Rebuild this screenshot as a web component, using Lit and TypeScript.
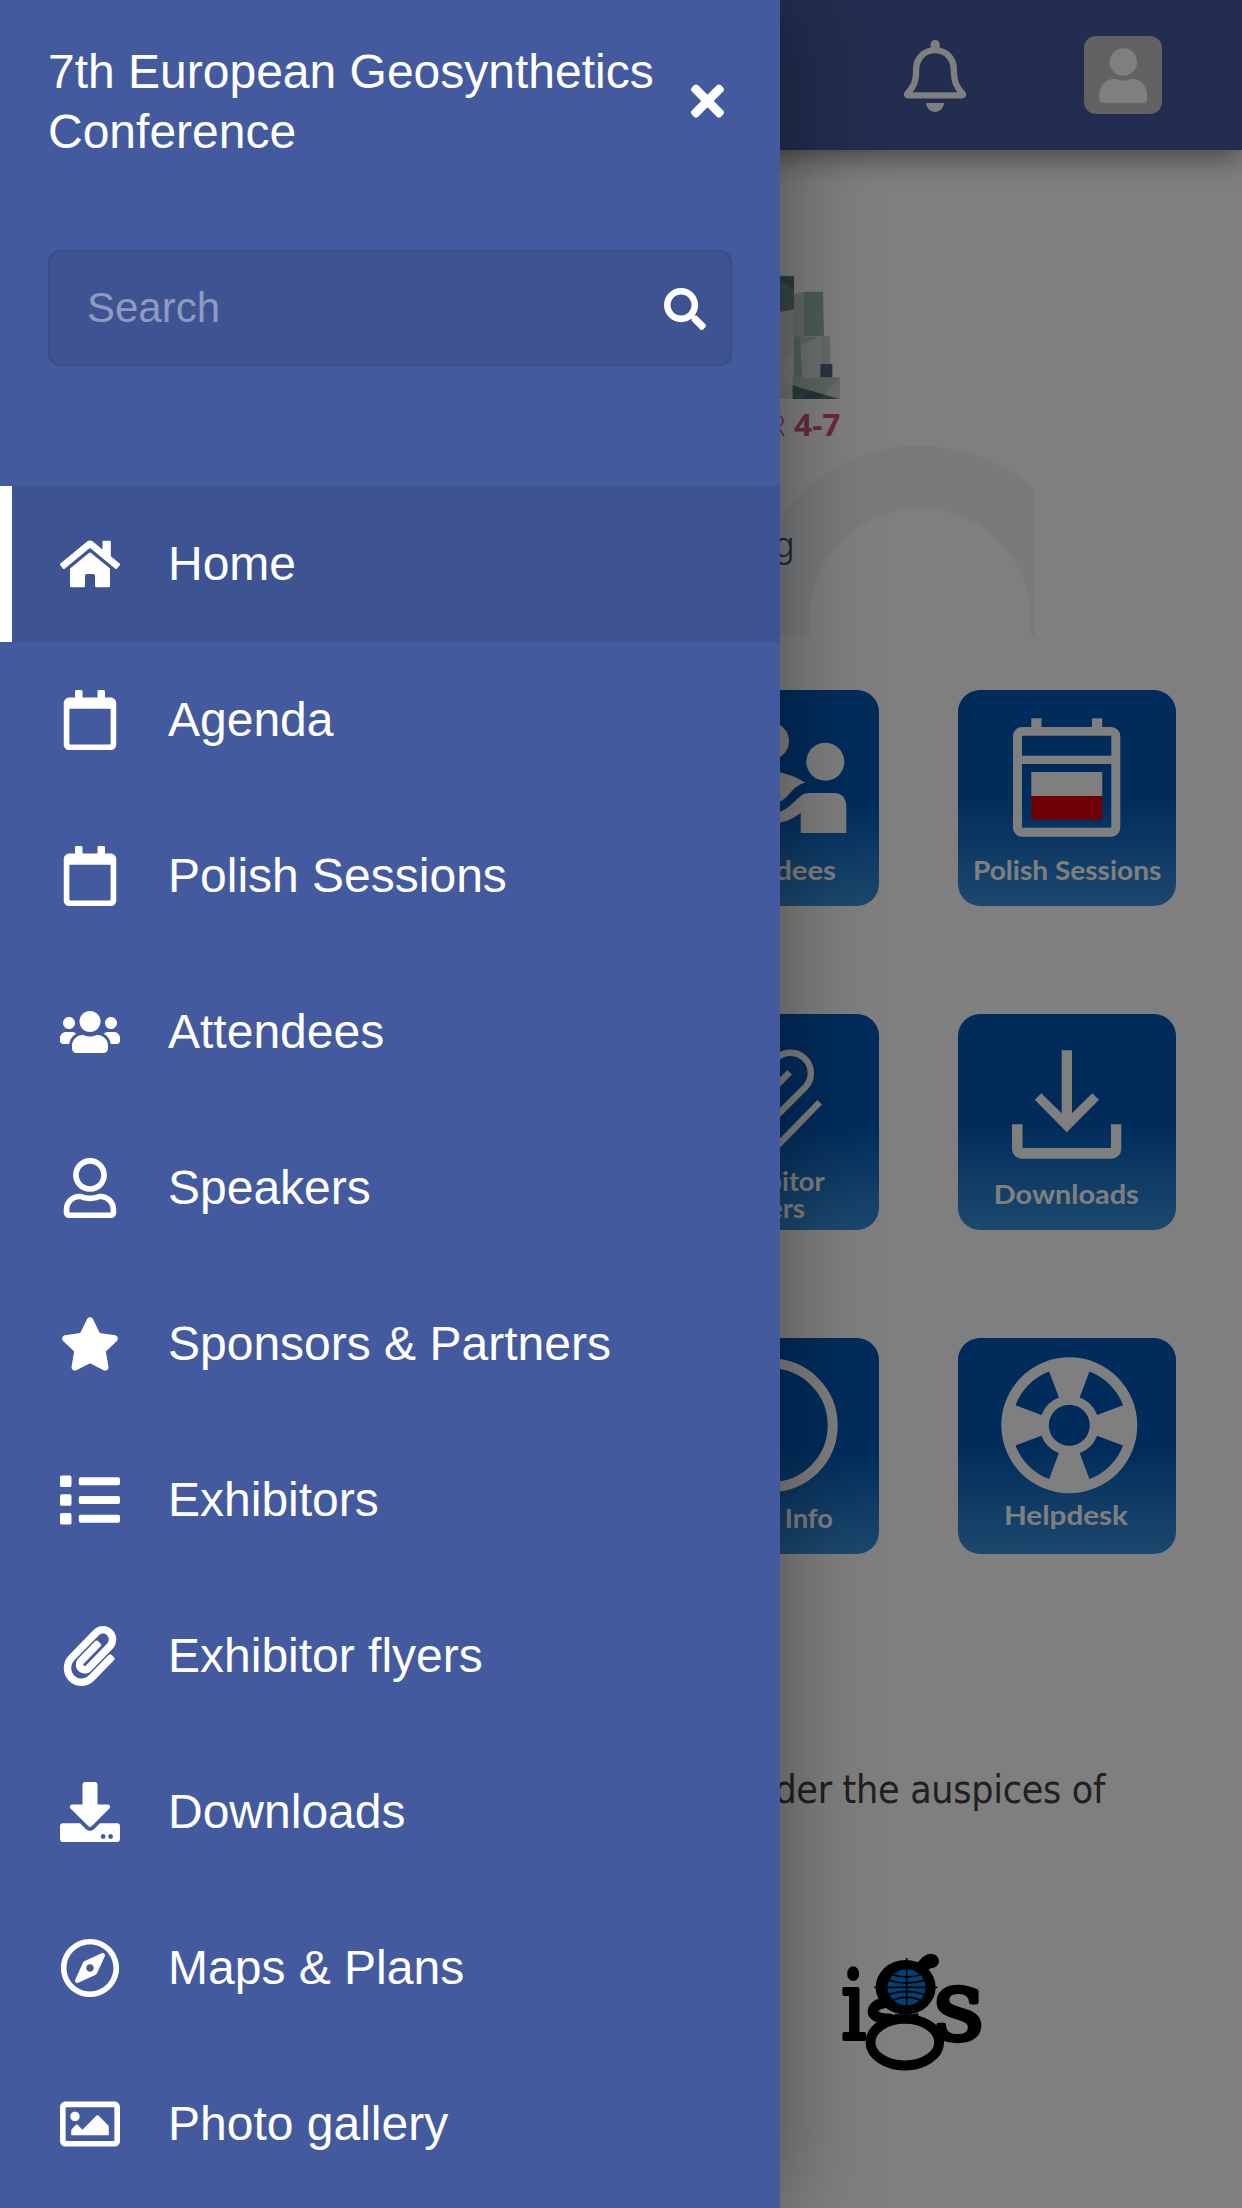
import { LitElement, html, css, svg } from "lit";
import { customElement, property } from "lit/decorators.js";

interface Glyph {
  width: number;
  d: string;
}

const GLYPHS: Record<string, Glyph> = {
  home: {
    width: 576,
    d: "M280.37 148.26L96 300.11V464a16 16 0 0 0 16 16l112.06-.29a16 16 0 0 0 15.92-16V368a16 16 0 0 1 16-16h64a16 16 0 0 1 16 16v95.64a16 16 0 0 0 16 16.05L464 480a16 16 0 0 0 16-16V300L295.67 148.26a12.19 12.19 0 0 0-15.3 0zM571.6 251.47L488 182.56V44.05a12 12 0 0 0-12-12h-56a12 12 0 0 0-12 12v72.61L318.47 43a48 48 0 0 0-61 0L4.34 251.47a12 12 0 0 0-1.6 16.9l25.5 31A12 12 0 0 0 45.15 301l235.22-193.74a12.19 12.19 0 0 1 15.3 0L530.9 301a12 12 0 0 0 16.9-1.6l25.5-31a12 12 0 0 0-1.7-16.93z",
  },
  calendar: {
    width: 448,
    d: "M400 64h-48V12c0-6.6-5.4-12-12-12h-40c-6.6 0-12 5.4-12 12v52H160V12c0-6.6-5.4-12-12-12h-40c-6.6 0-12 5.4-12 12v52H48C21.5 64 0 85.5 0 112v352c0 26.5 21.5 48 48 48h352c26.5 0 48-21.5 48-48V112c0-26.5-21.5-48-48-48zm-6 400H54c-3.3 0-6-2.7-6-6V160h352v298c0 3.3-2.7 6-6 6z",
  },
  users: {
    width: 640,
    d: "M96 224c35.3 0 64-28.7 64-64s-28.7-64-64-64-64 28.7-64 64 28.7 64 64 64zm448 0c35.3 0 64-28.7 64-64s-28.7-64-64-64-64 28.7-64 64 28.7 64 64 64zm32 32h-64c-17.6 0-33.5 7.1-45.1 18.6 40.3 22.1 68.9 62 75.1 109.4h66c17.7 0 32-14.3 32-32v-32c0-35.3-28.7-64-64-64zm-256 0c61.9 0 112-50.1 112-112S381.9 32 320 32 208 82.1 208 144s50.1 112 112 112zm76.8 32h-8.3c-20.8 10-43.9 16-68.5 16s-47.6-6-68.5-16h-8.3C179.6 288 128 339.6 128 403.2V432c0 26.5 21.5 48 48 48h288c26.5 0 48-21.5 48-48v-28.8c0-63.6-51.6-115.2-115.2-115.2zm-223.7-13.4C161.5 263.1 145.6 256 128 256H64c-35.3 0-64 28.7-64 64v32c0 17.7 14.3 32 32 32h65.9c6.3-47.4 34.9-87.3 75.2-109.4z",
  },
  user: {
    width: 448,
    d: "M313.6 304c-28.7 0-42.5 16-89.6 16-47.1 0-60.8-16-89.6-16C60.2 304 0 364.2 0 438.4V464c0 26.5 21.5 48 48 48h352c26.5 0 48-21.5 48-48v-25.6c0-74.2-60.2-134.4-134.4-134.4zM400 464H48v-25.6c0-47.6 38.8-86.4 86.4-86.4 14.6 0 38.3 16 89.6 16 51.7 0 74.9-16 89.6-16 47.6 0 86.4 38.8 86.4 86.4V464zM224 288c79.5 0 144-64.5 144-144S303.5 0 224 0 80 64.5 80 144s64.5 144 144 144zm0-240c52.9 0 96 43.1 96 96s-43.1 96-96 96-96-43.1-96-96 43.1-96 96-96z",
  },
  star: {
    width: 576,
    d: "M259.3 17.8L194 150.2 47.9 171.5c-26.2 3.8-36.7 36.1-17.7 54.6l105.7 103-25 145.5c-4.5 26.3 23.2 46 46.4 33.7L288 439.6l130.7 68.7c23.2 12.2 50.9-7.4 46.4-33.7l-25-145.5 105.7-103c19-18.5 8.5-50.8-17.7-54.6L382 150.2 316.7 17.8c-11.7-23.6-45.6-23.9-57.4 0z",
  },
  list: {
    width: 512,
    d: "M16 46h66a16 16 0 0 1 16 16v68a16 16 0 0 1-16 16H16a16 16 0 0 1-16-16V62a16 16 0 0 1 16-16zM16 206h66a16 16 0 0 1 16 16v68a16 16 0 0 1-16 16H16a16 16 0 0 1-16-16v-68a16 16 0 0 1 16-16zM16 366h66a16 16 0 0 1 16 16v68a16 16 0 0 1-16 16H16a16 16 0 0 1-16-16v-68a16 16 0 0 1 16-16zM176 62h320a16 16 0 0 1 16 16v36a16 16 0 0 1-16 16H176a16 16 0 0 1-16-16V78a16 16 0 0 1 16-16zM176 222h320a16 16 0 0 1 16 16v36a16 16 0 0 1-16 16H176a16 16 0 0 1-16-16v-36a16 16 0 0 1 16-16zM176 382h320a16 16 0 0 1 16 16v36a16 16 0 0 1-16 16H176a16 16 0 0 1-16-16v-36a16 16 0 0 1 16-16z",
  },
  clip: {
    width: 448,
    d: "M43.246 466.142c-58.43-60.289-57.341-157.511 1.386-217.581L254.392 34c44.316-45.332 116.351-45.336 160.671 0 43.89 44.894 43.943 117.329 0 162.276L232.214 383.128c-29.855 30.537-78.633 30.111-107.982-.998-28.275-29.97-27.368-77.473 1.452-106.953l143.743-146.835c6.182-6.314 16.312-6.422 22.626-.241l22.861 22.379c6.315 6.182 6.422 16.312.241 22.626L171.427 319.927c-4.932 5.045-5.236 13.428-.648 18.292 4.372 4.634 11.245 4.711 15.688.165l182.849-186.851c19.613-20.062 19.613-52.725-.011-72.798-19.189-19.627-49.957-19.637-69.154 0L90.39 293.295c-34.763 35.56-35.299 93.12-1.191 128.313 34.01 35.093 88.985 35.137 123.058.286l172.06-175.999c6.177-6.319 16.307-6.433 22.626-.256l22.877 22.364c6.319 6.177 6.434 16.307.256 22.626l-172.06 175.998c-59.576 60.938-155.943 60.216-214.77-.485z",
  },
  download: {
    width: 512,
    d: "M216 0h80c13.3 0 24 10.7 24 24v168h87.7c17.8 0 26.7 21.5 14.1 34.1L269.7 378.3c-7.5 7.5-19.8 7.5-27.3 0L90.1 226.1c-12.6-12.6-3.7-34.1 14.1-34.1H192V24c0-13.3 10.7-24 24-24zm296 376v112c0 13.3-10.7 24-24 24H24c-13.3 0-24-10.7-24-24V376c0-13.3 10.7-24 24-24h146.7l49 49c20.1 20.1 52.5 20.1 72.6 0l49-49H488c13.3 0 24 10.7 24 24zm-124 88c0-11-9-20-20-20s-20 9-20 20 9 20 20 20 20-9 20-20zm64 0c0-11-9-20-20-20s-20 9-20 20 9 20 20 20 20-9 20-20z",
  },
  compass: {
    width: 496,
    d: "M347.94 129.86L203.6 195.83a31.938 31.938 0 0 0-15.77 15.77l-65.97 144.34c-7.61 16.65 9.54 33.81 26.2 26.2l144.34-65.97a31.938 31.938 0 0 0 15.77-15.77l65.97-144.34c7.61-16.66-9.54-33.81-26.2-26.2zm-77.36 148.72c-12.47 12.47-32.69 12.47-45.16 0-12.47-12.47-12.47-32.69 0-45.16 12.47-12.47 32.69-12.47 45.16 0 12.47 12.47 12.47 32.69 0 45.16zM248 8C111.03 8 0 119.03 0 256s111.03 248 248 248 248-111.03 248-248S384.97 8 248 8zm0 448c-110.28 0-200-89.72-200-200S137.72 56 248 56s200 89.72 200 200-89.72 200-200 200z",
  },
  image: {
    width: 512,
    d: "M464 64H48C21.49 64 0 85.49 0 112v288c0 26.51 21.49 48 48 48h416c26.51 0 48-21.49 48-48V112c0-26.51-21.49-48-48-48zm-6 336H54a6 6 0 0 1-6-6V118a6 6 0 0 1 6-6h404a6 6 0 0 1 6 6v276a6 6 0 0 1-6 6zM128 152c-22.091 0-40 17.909-40 40s17.909 40 40 40 40-17.909 40-40-17.909-40-40-40zM96 352h320v-80l-87.515-87.515c-4.686-4.686-12.284-4.686-16.971 0L192 304l-39.515-39.515c-4.686-4.686-12.284-4.686-16.971 0L96 304v48z",
  },
  close: {
    width: 352,
    d: "M242.72 256l100.07-100.07c12.28-12.28 12.28-32.19 0-44.48l-22.24-22.24c-12.28-12.28-32.19-12.28-44.48 0L176 189.28 75.93 89.21c-12.28-12.28-32.19-12.28-44.48 0L9.21 111.45c-12.28 12.28-12.28 32.19 0 44.48L109.28 256 9.21 356.07c-12.28 12.28-12.28 32.19 0 44.48l22.24 22.24c12.28 12.28 32.2 12.28 44.48 0L176 322.72l100.07 100.07c12.28 12.28 32.2 12.28 44.48 0l22.24-22.24c12.28-12.28 12.28-32.19 0-44.48L242.72 256z",
  },
  search: {
    width: 512,
    d: "M505 442.7L405.3 343c-4.5-4.5-10.6-7-17-7H372c27.6-35.3 44-79.7 44-128C416 93.1 322.9 0 208 0S0 93.1 0 208s93.1 208 208 208c48.3 0 92.7-16.4 128-44v16.3c0 6.4 2.5 12.5 7 17l99.7 99.7c9.4 9.4 24.6 9.4 33.9 0l28.3-28.3c9.4-9.4 9.4-24.6.1-34zM208 336c-70.7 0-128-57.2-128-128 0-70.7 57.2-128 128-128 70.7 0 128 57.2 128 128 0 70.7-57.2 128-128 128z",
  },
};

@customElement("ui-glyph")
export class UiGlyph extends LitElement {
  @property() name = "home";

  static styles = css`
    :host {
      display: block;
    }
    .glyph {
      display: block;
      width: 100%;
      height: 100%;
      fill: currentColor;
    }
  `;

  render() {
    const g = GLYPHS[this.name];
    return html`<svg class="glyph" viewBox="0 0 ${g.width} 512" aria-hidden="true"><path d=${g.d}></path></svg>`;
  }
}

const MENU = [
  { icon: "home", label: "Home", active: true },
  { icon: "calendar", label: "Agenda" },
  { icon: "calendar", label: "Polish Sessions" },
  { icon: "users", label: "Attendees" },
  { icon: "user", label: "Speakers" },
  { icon: "star", label: "Sponsors & Partners" },
  { icon: "list", label: "Exhibitors" },
  { icon: "clip", label: "Exhibitor flyers" },
  { icon: "download", label: "Downloads" },
  { icon: "compass", label: "Maps & Plans" },
  { icon: "image", label: "Photo gallery" },
];

@customElement("side-menu")
export class SideMenu extends LitElement {
  static styles = css`
    :host {
      display: block;
      box-sizing: border-box;
      color: #fff;
      background: #445a9f;
      font-family: "Liberation Sans", Arial, sans-serif;
      font-size: 48px;
      box-shadow: 0 0 90px rgba(0, 0, 0, 0.4);
    }
    .head {
      display: flex;
      align-items: center;
      justify-content: space-between;
      height: 202px;
      padding: 0 56px 0 48px;
    }
    .title {
      width: 630px;
      padding-top: 2px;
      line-height: 60px;
    }
    .close {
      width: 33px;
      height: 48px;
    }
    .search {
      box-sizing: border-box;
      display: flex;
      align-items: center;
      justify-content: space-between;
      height: 116px;
      margin: 48px 48px 120px;
      padding: 0 24px 0 37px;
      border: 2px solid #3a4e89;
      border-radius: 12px;
      background: #3e5392;
    }
    .hint {
      font-size: 42px;
      color: #8f9ac1;
    }
    .lens {
      width: 42px;
      height: 42px;
      margin-top: 2px;
    }
    .item {
      box-sizing: border-box;
      display: flex;
      align-items: center;
      gap: 48px;
      height: 156px;
      padding-left: 48px;
      border-left: 12px solid transparent;
      white-space: nowrap;
    }
    .item.active {
      border-left-color: #fff;
      background: #3e5392;
    }
    .cell {
      display: flex;
      justify-content: center;
      width: 60px;
    }
    .label {
      padding-bottom: 2px;
    }
    .icon {
      width: 60px;
      height: 60px;
    }
  `;

  render() {
    return html`
      <div class="head">
        <div class="title">7th European Geosynthetics Conference</div>
        <ui-glyph class="close" name="close"></ui-glyph>
      </div>
      <div class="search">
        <span class="hint">Search</span>
        <ui-glyph class="lens" name="search"></ui-glyph>
      </div>
      <nav>
        ${MENU.map(
          (m) => html`<div class="item ${m.active ? "active" : ""}">
            <div class="cell"><ui-glyph class="icon" name=${m.icon}></ui-glyph></div>
            <span class="label">${m.label}</span>
          </div>`
        )}
      </nav>
    `;
  }
}

interface Caption {
  text: string;
  x: number;
  y: number;
  w: number;
}

// Lifebuoy: a disc with four wedge openings and a round centre opening.
const LIFEBUOY =
  "M68 0A68 68 0 1 1 -68 0A68 68 0 1 1 68 0Z" +
  "M20.5 0A20.5 20.5 0 1 0 -20.5 0A20.5 20.5 0 1 0 20.5 0Z" +
  "M10.4 -27.8L20.1 -53.8A57.4 57.4 0 0 1 53.8 -20.1L27.8 -10.4A29.7 29.7 0 0 0 10.4 -27.8Z" +
  "M27.8 10.4L53.8 20.1A57.4 57.4 0 0 1 20.1 53.8L10.4 27.8A29.7 29.7 0 0 0 27.8 10.4Z" +
  "M-10.4 27.8L-20.1 53.8A57.4 57.4 0 0 1 -53.8 20.1L-27.8 10.4A29.7 29.7 0 0 0 -10.4 27.8Z" +
  "M-27.8 -10.4L-53.8 -20.1A57.4 57.4 0 0 1 -20.1 -53.8L-10.4 -27.8A29.7 29.7 0 0 0 -27.8 -10.4Z";

const TILES: { art: unknown; captions: Caption[] }[] = [
  {
    art: svg`
      <circle cx="109.2" cy="51" r="18.8" fill="#fff"></circle>
      <circle cx="164.3" cy="71.7" r="19" fill="#fff"></circle>
      <path fill="#fff" d="M90 82H112C124 82 135 87 144 92.7C130 97 129 107 118.7 111.7C112 116 104 117 90 117Z"></path>
      <path fill="#fff" d="M139.7 143V122.7C133 128 127 131 118.7 132.7L100 135V124C108 124 113 123.5 118.7 121.7C129 118 133 111 139.7 106Q143 103 148 103H172Q185.3 103 185.3 117V143Z"></path>`,
    captions: [{ text: "Attendees", x: 42, y: 190.3, w: 133 }],
  },
  {
    art: svg`
      <path fill="#fff" fill-rule="evenodd" d="M64 37H153.3a9 9 0 0 1 9 9V137.7a9 9 0 0 1-9 9H64a9 9 0 0 1-9-9V46a9 9 0 0 1 9-9zM64 45.7V65.7H153.3V45.7zM64 74V137.7H153.3V74z"></path>
      <rect x="73.3" y="28.3" width="10.2" height="11" fill="#fff"></rect>
      <rect x="134" y="28.3" width="10.2" height="11" fill="#fff"></rect>
      <rect x="73.3" y="82" width="71" height="24" fill="#fff"></rect>
      <rect x="73.3" y="106" width="71" height="23.7" fill="#de000c"></rect>`,
    captions: [{ text: "Polish Sessions", x: 15, y: 190.3, w: 188.4 }],
  },
  {
    art: svg`
      <path fill="none" stroke="#fff" stroke-width="6.4" d="M76 84L115.9 43.9A20.4 20.4 0 0 1 144.7 72.7L96 121.4M128.7 58.3L90 97M158.7 88.3L104 144.5"></path>`,
    captions: [
      { text: "Exhibitor", x: 53.6, y: 177, w: 110 },
      { text: "flyers", x: 76, y: 203.7, w: 68 },
    ],
  },
  {
    art: svg`
      <path fill="#fff" d="M103.7 36.3H114V99.3L134.3 79.3L141 85.7L108.8 118.3L76.8 85.7L83.3 79.3L103.7 99.3Z"></path>
      <path fill="#fff" d="M54 110.3H64.5V134H153V110.3H163.3V135a9.7 9.7 0 0 1-9.7 9.7H63.7A9.7 9.7 0 0 1 54 135Z"></path>`,
    captions: [{ text: "Downloads", x: 35.8, y: 190.3, w: 145 }],
  },
  {
    art: svg`<circle cx="110" cy="87.3" r="61.7" fill="none" stroke="#fff" stroke-width="10"></circle>`,
    captions: [{ text: "Event Info", x: 48, y: 190, w: 124 }],
  },
  {
    art: svg`<path transform="translate(111.3 87.3)" fill="#fff" fill-rule="evenodd" d=${LIFEBUOY}></path>`,
    captions: [{ text: "Helpdesk", x: 46, y: 187.3, w: 124 }],
  },
];

@customElement("app-root")
export class AppRoot extends LitElement {
  static styles = css`
    :host {
      display: block;
      position: relative;
      width: 1242px;
      height: 2208px;
      overflow: hidden;
      background: #fff;
      font-family: "Liberation Sans", Arial, sans-serif;
    }
    .page {
      display: flex;
      flex-direction: column;
      height: 2208px;
    }
    .bar {
      box-sizing: border-box;
      display: flex;
      align-items: center;
      justify-content: flex-end;
      gap: 118px;
      height: 150px;
      padding-right: 80px;
      background: #445a9f;
      box-shadow: 0 6px 30px rgba(0, 0, 0, 0.5);
    }
    .bell {
      width: 62px;
      height: 72px;
      margin-top: 2px;
    }
    .avatar {
      width: 78px;
      height: 78px;
      border-radius: 12px;
      background: #c4c4c4;
    }
    .banner {
      display: block;
      width: 828px;
      height: 414px;
      margin: 72px auto 54px;
    }
    .tiles {
      display: grid;
      grid-template-columns: repeat(2, 217.4px);
      grid-auto-rows: 216px;
      column-gap: 79.6px;
      row-gap: 108px;
      justify-content: end;
      padding-right: 66.3px;
    }
    .tile {
      display: block;
      width: 217.4px;
      height: 216px;
      border-radius: 22px;
      background: linear-gradient(#0058b8 50%, #3a92dc);
    }
    .caption {
      font-family: Lato, sans-serif;
      font-weight: 700;
      font-size: 27px;
      fill: #fff;
    }
    .auspices {
      margin-top: 201px;
      padding-right: 137px;
      text-align: right;
      font-family: "DejaVu Sans Condensed", "DejaVu Sans", sans-serif;
      font-stretch: condensed;
      font-size: 39px;
      letter-spacing: -0.3px;
      line-height: 70px;
      color: #404040;
    }
    .igs {
      display: block;
      width: 142px;
      height: 118px;
      margin: 128px 0 0 841px;
      overflow: visible;
    }
    .letter {
      font-family: "DejaVu Serif", serif;
      font-weight: 400;
      font-size: 300px;
      stroke: #000;
      stroke-width: 13px;
      stroke-linejoin: round;
    }
    .date {
      font-family: "Open Sans", sans-serif;
      font-weight: 300;
      font-size: 30px;
      fill: #cf5583;
    }
    .strong {
      font-weight: 700;
    }
    .slogan {
      font-family: Inter, Roboto, sans-serif;
      font-weight: 300;
      font-size: 35px;
      fill: #3a5670;
    }
    .shade {
      position: absolute;
      inset: 0;
      background: rgba(0, 0, 0, 0.5);
    }
    .drawer {
      position: absolute;
      top: 0;
      left: 0;
      width: 780px;
      height: 2208px;
    }
  `;

  private banner() {
    return html`<svg class="banner" viewBox="207 222 828 414">
      <path fill="#f2f4f8" d="M746.7 636V619A173.3 173.3 0 0 1 1035 489.4V636H1030.7V619A110.7 110.7 0 0 0 809.3 619V636Z"></path>
      <g transform="translate(760 240) scale(.33333)">
        <path fill="#d5dcda" d="M40 215L102 208V477H40Z"></path>
        <path fill="#6f8f8a" d="M30 106L102 109V208L40 220Z"></path>
        <path fill="#577a77" d="M40 112L102 109V146Z"></path>
        <path fill="#c6d0ce" d="M102 162L131 155V290L102 325Z"></path>
        <path fill="#9eb9b3" d="M131 155H189L192 289H131Z"></path>
        <path fill="#a0bbb4" d="M102 290H126V412H102Z"></path>
        <path fill="#dbe0df" d="M120 290H181V412H126Z"></path>
        <path fill="#bccbc7" d="M120 290H180L120 314Z"></path>
        <path fill="#ccd6d3" d="M181 289H211V372H181Z"></path>
        <path fill="#e2e6e6" d="M60 380L102 325V436L60 425Z"></path>
        <path fill="#526d80" d="M181 372H217V414H181Z"></path>
        <path fill="#b9cac5" d="M98 412H239V477H98Z"></path>
        <path fill="#d3dbd9" d="M239 416V476L194 462Z"></path>
        <path fill="#547b7a" d="M98 436L236 477H98Z"></path>
        <path fill="#4c6477" d="M152 452L194 465L172 477H128Z"></path>
      </g>
      <text class="date" x="785.5" y="435.7" text-anchor="end">SEPTEMBER</text>
      <text class="date strong" x="794" y="435.7" textLength="46.5" lengthAdjust="spacingAndGlyphs">4-7</text>
      <text class="slogan" x="794.5" y="556.7" text-anchor="end">g</text>
    </svg>`;
  }

  private igs() {
    return html`<svg class="igs" viewBox="243 640 426 354">
      <text class="letter" transform="translate(244 899) scale(.78 .95)">i</text>
      <text class="letter" transform="translate(519 901) scale(1 1)">s</text>
      <ellipse cx="437" cy="743" rx="90" ry="82"></ellipse>
      <path d="M440 655V680M343 743H532" stroke="#000" stroke-width="5"></path>
      <ellipse cx="512" cy="664" rx="25" ry="22"></ellipse>
      <path d="M470 672L490 650L520 680L500 695Z"></path>
      <ellipse cx="440" cy="743" rx="57" ry="54" fill="#0080e6"></ellipse>
      <path fill="none" stroke="#000" stroke-width="5" d="M440 688V798M383 743H497M388 722Q440 738 492 722M400 706Q440 718 480 706M388 764Q440 746 492 764M400 781Q440 764 480 781"></path>
      <path fill="none" stroke="#000" stroke-width="32" stroke-linecap="round" d="M372 790C345 793 332 812 342 824C350 834 366 838 392 838"></path>
      <path d="M404 822Q440 830 475 820V835H404Z"></path>
      <ellipse cx="434.5" cy="907.5" rx="103" ry="70" fill="none" stroke="#000" stroke-width="29.5"></ellipse>
    </svg>`;
  }

  render() {
    return html`
      <div class="page">
        <header class="bar">
          <svg class="bell" viewBox="402 120 186 216">
            <path fill="none" stroke="#fff" stroke-width="19" stroke-linejoin="round" d="M495 150.5C462 150.5 438.5 176 438.5 208C438.5 245 431 261 412 281Q409 286 414 286H576Q581 286 578 281C559 261 551.5 245 551.5 208C551.5 176 528 150.5 495 150.5Z"></path>
            <rect x="482" y="120" width="27" height="34" rx="13" fill="#fff"></rect>
            <path fill="#fff" d="M468 309H522a27 27 0 0 1-54 0z"></path>
          </svg>
          <svg class="avatar" viewBox="942 108 234 234">
            <circle cx="1060" cy="186" r="41" fill="#fff"></circle>
            <path fill="#fff" d="M988 296V285c0-28 20-48 44-48 10 0 14 5 28 5s18-5 28-5c24 0 43 20 43 48v11q0 12-12 12h-119q-12 0-12-12z"></path>
          </svg>
        </header>
        ${this.banner()}
        <section class="tiles">
          ${TILES.map(
            (t) => html`<svg class="tile" viewBox="0 0 217.4 216">
              ${t.art}
              ${t.captions.map(
                (c) => svg`<text class="caption" x=${c.x} y=${c.y} textLength=${c.w} lengthAdjust="spacingAndGlyphs">${c.text}</text>`
              )}
            </svg>`
          )}
        </section>
        <div class="auspices">Under the auspices of</div>
        ${this.igs()}
      </div>
      <div class="shade"></div>
      <side-menu class="drawer"></side-menu>
    `;
  }
}
